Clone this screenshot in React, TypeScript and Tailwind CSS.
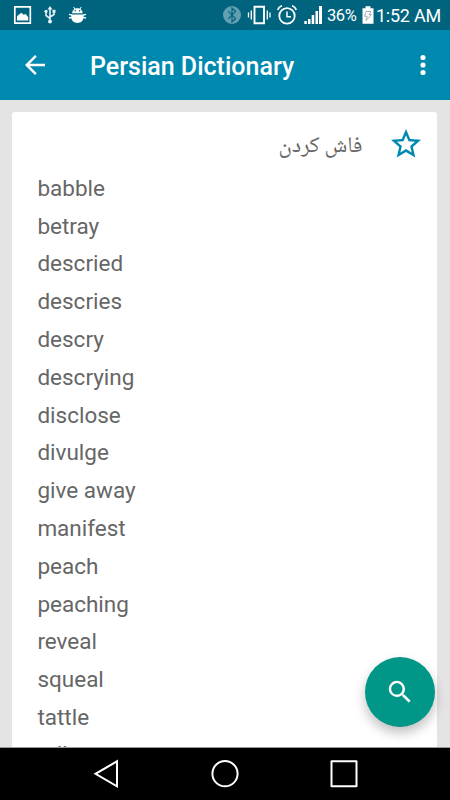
import React from "react";

const words = [
  "babble", "betray", "descried", "descries", "descry", "descrying", "disclose", "divulge",
  "give away", "manifest", "peach", "peaching", "reveal", "squeal", "tattle", "tell",
];

function StatusBar() {
  return (
    <div className="flex h-[30px] shrink-0 items-center bg-[#00647f] text-white">
      <svg className="h-[30px] w-[320px] shrink-0" viewBox="0 0 320 30" fill="none">
        <path d="M14.8 6.8h15.5v16.4H14.8z" stroke="#fff" strokeWidth="1.7" />
        <path d="M17 20.5v-4.2l2-1.8 2.5-1.8 2.2 2 2-.7 2.5 3.2v3.3z" fill="#fff" />
        <g stroke="#e4f1f5" strokeWidth="1.6">
          <path d="M50 8v13M46 12v3.5l4 3M54 11.5v3l-4 2.5" />
        </g>
        <path d="M47.5 9.5L50 6l2.5 3.5z" fill="#e4f1f5" />
        <circle cx="50" cy="21.5" r="2" fill="#e4f1f5" />
        <circle cx="46" cy="11.3" r="1.6" fill="#e4f1f5" />
        <path d="M52.5 9.8h3v3h-3z" fill="#e4f1f5" />
        <path d="M73.6 7l1.2 2M81.2 7L80 9" stroke="#fff" />
        <path d="M72.2 13.2c0-6.6 10.4-6.6 10.4 0z" fill="#fff" />
        <path d="M71.3 14.6h12.2v2.6c0 7.6-12.2 7.6-12.2 0z" fill="#fff" />
        <circle cx="75.2" cy="10.7" r=".8" fill="#00647f" />
        <circle cx="79.6" cy="10.7" r=".8" fill="#00647f" />
        <path d="M69 14.4l3 .8M86 14.4l-3 .8M69 18l3-.6M86 18l-3-.6" stroke="#fff" strokeWidth="1.3" />

        <circle cx="232" cy="15" r="9" fill="#639fb0" />
        <path d="M228.2 11.2l7.4 7.4-3.6 3.2V8.2l3.6 3.2-7.4 7.4" stroke="#00647f" strokeWidth="1.2" />
        <path d="M254.5 6.8h9.5v16.4h-9.5z" stroke="#fff" strokeWidth="1.9" />
        <path d="M251.3 10.5v9M267.3 10.5v9M248.5 12.5v5M270 12.5v5" stroke="#fff" strokeWidth="1.3" />
        <circle cx="287" cy="15.9" r="7.7" stroke="#fff" strokeWidth="1.8" />
        <path d="M287 11.5v5.2h4" stroke="#fff" strokeWidth="1.5" />
        <path d="M277.8 10c.7-2.2 2-3.6 4.2-4.2M296.2 10c-.7-2.2-2-3.6-4.2-4.2" stroke="#fff" strokeWidth="1.6" />
        <path d="M304.3 21h2.5v3h-2.5zM308 19h2.5v5H308zM311.7 15h2.5v9h-2.5zM315.5 11h2.5v13h-2.5z" fill="#fff" />
        <path d="M319 6h1v18h-1z" fill="#fff" />
      </svg>
      <svg className="h-[30px] w-[7px] shrink-0" viewBox="0 0 7 30">
        <path d="M0 6h2v18H0z" fill="#fff" />
      </svg>
      <span className="w-[35px] shrink-0 pt-0.5 text-[16.5px] leading-none tracking-[-0.4px]">36%</span>
      <svg className="h-[30px] w-[14px] shrink-0" viewBox="362 0 14 30">
        <path d="M362.5 8.3h3V6.2h5v2.1h3v15.4h-11z" fill="#fff" />
        <path d="M366 11.5h5l-2 3h2.4l-5.3 6 1.1-4.2h-2.5z" fill="none" stroke="#9ba7ad" strokeWidth=".9" />
      </svg>
      <span className="whitespace-nowrap pt-0.5 text-[18px] leading-none tracking-[-0.25px]">1:52 AM</span>
    </div>
  );
}

function AppBar() {
  return (
    <header className="flex h-[70px] shrink-0 items-center bg-[#0089af] text-white">
      <svg className="ml-5 h-[30px] w-[30px]" viewBox="0 0 24 24" fill="currentColor">
        <path d="M20 11H7.83l5.59-5.59L12 4l-8 8 8 8 1.41-1.41L7.83 13H20v-2z" />
      </svg>
      <h1 className="ml-10 mt-0.5 flex-1 text-[25px] font-medium leading-none">Persian Dictionary</h1>
      <svg className="mr-[12.5px] h-[30px] w-[30px]" viewBox="0 0 24 24" fill="currentColor">
        <circle cx="12" cy="6" r="2.05" />
        <circle cx="12" cy="12" r="2.05" />
        <circle cx="12" cy="18" r="2.05" />
      </svg>
    </header>
  );
}

export default function App() {
  return (
    <div className="relative flex h-[800px] w-[450px] flex-col overflow-hidden bg-[#e4e4e4] font-['Roboto',sans-serif]">
      <StatusBar />
      <AppBar />
      <main className="min-h-0 flex-1 overflow-hidden pl-[12.4px] pr-[12.6px] pt-[12.4px]">
        <article className="h-[700px] rounded-[3px] bg-white text-[#666]">
          <div className="flex h-[57.3px] items-start justify-end pr-[13px] pt-[13.6px]">
            <span dir="rtl" lang="fa" className="mr-[26px] mt-[7px] whitespace-nowrap font-['Noto_Naskh_Arabic','Noto_Sans_Arabic_UI','DejaVu_Sans',sans-serif] text-[22.5px] leading-[28px]">فاش کردن</span>
            <svg className="h-[36px] w-[36px]" viewBox="0 0 24 24" fill="#0089af">
              <path d="M22 9.24l-7.19-.62L12 2 9.19 8.63 2 9.24l5.46 4.73L5.82 21 12 17.27 18.18 21l-1.63-7.03L22 9.24zM12 15.4l-3.76 2.27 1-4.28-3.32-2.88 4.38-.38L12 6.1l1.71 4.04 4.38.38-3.32 2.88 1 4.28L12 15.4z" />
            </svg>
          </div>
          <ul className="pl-[25px]">
            {words.map((word) => (
              <li key={word} className="h-[37.82px] text-[22.5px] leading-[37.82px] last:-mt-px">{word}</li>
            ))}
          </ul>
        </article>
      </main>
      <button aria-label="Search" className="absolute left-[365px] top-[657px] flex h-[70px] w-[70px] items-center justify-center rounded-full bg-[#009688] shadow-[0_6px_12px_rgba(0,0,0,0.25)]">
        <svg className="h-[30px] w-[30px]" viewBox="0 0 24 24" fill="#fff">
          <path d="M15.5 14h-.79l-.28-.27A6.471 6.471 0 0 0 16 9.5 6.5 6.5 0 1 0 9.5 16c1.61 0 3.09-.59 4.23-1.57l.27.28v.79l5 4.99L20.49 19l-4.99-5zm-6 0C7.01 14 5 11.99 5 9.5S7.01 5 9.5 5 14 7.01 14 9.5 11.99 14 9.5 14z" />
        </svg>
      </button>
      <nav className="h-[53px] shrink-0 border-t border-[#999] bg-black">
        <svg className="h-[52px] w-full" viewBox="0 748 450 52" fill="none" stroke="#fff" strokeWidth="2">
          <path d="M117 761.3v25l-21.5-12.5z" />
          <circle cx="225" cy="773.7" r="12.6" />
          <path d="M331.5 761.2h25v25h-25z" strokeLinejoin="round" />
        </svg>
      </nav>
    </div>
  );
}
